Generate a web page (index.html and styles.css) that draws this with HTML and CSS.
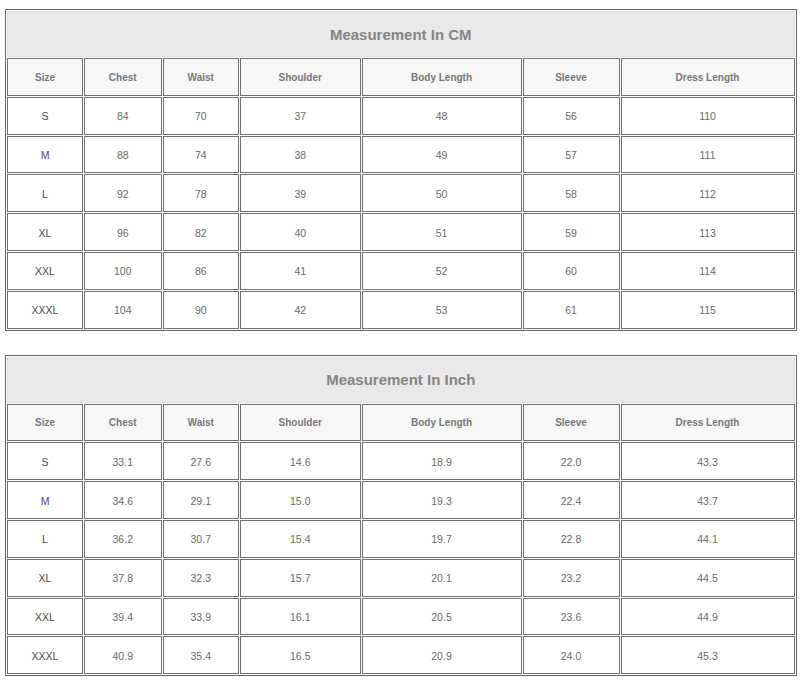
FILE: index.html
```html
<!DOCTYPE html>
<html lang="en">
<head>
<meta charset="utf-8">
<title>Size Chart</title>
<link rel="stylesheet" href="styles.css">
</head>
<body>
<div class="chart">
  <div class="title">Measurement In CM</div>
  <div class="cell head">Size</div><div class="cell head">Chest</div><div class="cell head">Waist</div><div class="cell head">Shoulder</div><div class="cell head">Body Length</div><div class="cell head">Sleeve</div><div class="cell head">Dress Length</div>
  <div class="cell size">S</div><div class="cell">84</div><div class="cell">70</div><div class="cell">37</div><div class="cell">48</div><div class="cell">56</div><div class="cell">110</div>
  <div class="cell size">M</div><div class="cell">88</div><div class="cell">74</div><div class="cell">38</div><div class="cell">49</div><div class="cell">57</div><div class="cell">111</div>
  <div class="cell size">L</div><div class="cell">92</div><div class="cell">78</div><div class="cell">39</div><div class="cell">50</div><div class="cell">58</div><div class="cell">112</div>
  <div class="cell size">XL</div><div class="cell">96</div><div class="cell">82</div><div class="cell">40</div><div class="cell">51</div><div class="cell">59</div><div class="cell">113</div>
  <div class="cell size">XXL</div><div class="cell">100</div><div class="cell">86</div><div class="cell">41</div><div class="cell">52</div><div class="cell">60</div><div class="cell">114</div>
  <div class="cell size">XXXL</div><div class="cell">104</div><div class="cell">90</div><div class="cell">42</div><div class="cell">53</div><div class="cell">61</div><div class="cell">115</div>
</div>
<div class="chart">
  <div class="title">Measurement In Inch</div>
  <div class="cell head">Size</div><div class="cell head">Chest</div><div class="cell head">Waist</div><div class="cell head">Shoulder</div><div class="cell head">Body Length</div><div class="cell head">Sleeve</div><div class="cell head">Dress Length</div>
  <div class="cell size">S</div><div class="cell">33.1</div><div class="cell">27.6</div><div class="cell">14.6</div><div class="cell">18.9</div><div class="cell">22.0</div><div class="cell">43.3</div>
  <div class="cell size">M</div><div class="cell">34.6</div><div class="cell">29.1</div><div class="cell">15.0</div><div class="cell">19.3</div><div class="cell">22.4</div><div class="cell">43.7</div>
  <div class="cell size">L</div><div class="cell">36.2</div><div class="cell">30.7</div><div class="cell">15.4</div><div class="cell">19.7</div><div class="cell">22.8</div><div class="cell">44.1</div>
  <div class="cell size">XL</div><div class="cell">37.8</div><div class="cell">32.3</div><div class="cell">15.7</div><div class="cell">20.1</div><div class="cell">23.2</div><div class="cell">44.5</div>
  <div class="cell size">XXL</div><div class="cell">39.4</div><div class="cell">33.9</div><div class="cell">16.1</div><div class="cell">20.5</div><div class="cell">23.6</div><div class="cell">44.9</div>
  <div class="cell size">XXXL</div><div class="cell">40.9</div><div class="cell">35.4</div><div class="cell">16.5</div><div class="cell">20.9</div><div class="cell">24.0</div><div class="cell">45.3</div>
</div>
</body>
</html>
```
FILE: styles.css
```css
html, body {
  background: #ffffff;
}
body {
  margin: 9px 0 0 5px;
  font-family: "Liberation Sans", Arial, sans-serif;
}
.chart {
  display: grid;
  grid-template-columns: 76px 77.5px 76.5px 120.5px 160px 97px 174px;
  grid-template-rows: 46px repeat(7, 37.8px);
  gap: 1px;
  padding: 1px;
  border: 1px solid #666666;
  width: max-content;
  margin-bottom: 24px;
}
.title {
  grid-column: 1 / -1;
  box-sizing: border-box;
  background: #e9e9e9;
  border: 1px solid #dedede;
  display: flex;
  align-items: center;
  justify-content: center;
  font-size: 15px;
  font-weight: bold;
  color: #858585;
}
.cell {
  box-sizing: border-box;
  border: 1px solid #707070;
  display: flex;
  align-items: center;
  justify-content: center;
  padding-top: 1px;
  font-size: 10.5px;
  color: #6a6a6a;
  background: #ffffff;
}
.head {
  background: #f7f7f7;
  font-weight: bold;
  font-size: 10px;
  color: #777777;
}
.size {
  color: #4a4a4a;
}
```
